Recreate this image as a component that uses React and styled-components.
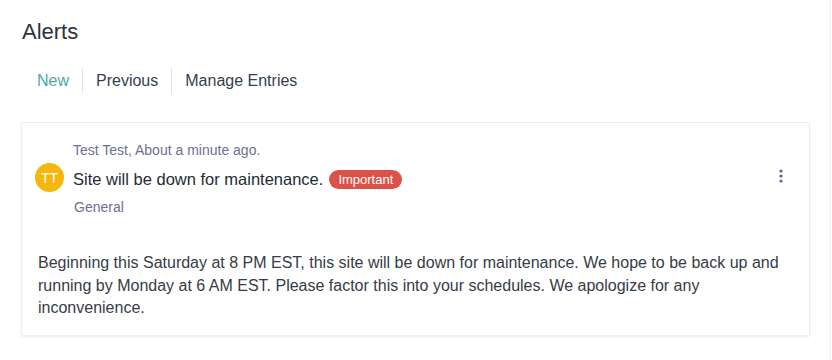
import React from "react";
import styled, { createGlobalStyle } from "styled-components";

const GlobalStyle = createGlobalStyle`
	html, body {
		margin: 0;
		padding: 0;
		background: #fff;
	}
	body {
		font-family: "Liberation Sans", Arial, sans-serif;
		-webkit-font-smoothing: antialiased;
	}
`;

const Page = styled.div`
	width: 831px;
	min-height: 360px;
	box-sizing: border-box;
	border-right: 1px solid #f0f0f2;
	padding: 19px 22px 0 21px;
`;

const Heading = styled.h1`
	margin: 0 0 0 1px;
	font-size: 22px;
	line-height: 26px;
	font-weight: 400;
	color: #2b333d;
`;

const Tabs = styled.nav`
	display: flex;
	align-items: center;
	margin: 23px 0 29px 3px;
`;

const Tab = styled.a`
	display: flex;
	align-items: center;
	height: 25px;
	padding: 0 13px;
	font-size: 16px;
	color: ${(p) => (p.$active ? "#4ba7a8" : "#333f4f")};
	cursor: pointer;
	& + & {
		border-left: 1px solid #dfe1e4;
	}
`;

const Card = styled.section`
	box-sizing: border-box;
	width: 789px;
	border: 1px solid #eeeeef;
	border-radius: 2px;
	box-shadow: 0 1px 2px rgba(0, 0, 0, 0.08);
	padding: 17px 16px 15px 13px;
`;

const Header = styled.div`
	display: grid;
	grid-template-columns: 29px 1fr 24px;
	column-gap: 9px;
	align-items: center;
`;

const Meta = styled.div`
	grid-column: 2;
	font-size: 14px;
	line-height: 20px;
	color: #6d7094;
	margin-top: ${(p) => (p.$tag ? "5px" : "0")};
	margin-left: ${(p) => (p.$tag ? "1px" : "0")};
`;

const Avatar = styled.div`
	grid-column: 1;
	width: 29px;
	height: 29px;
	border-radius: 50%;
	background: #f5b70c;
	color: #fff;
	font-size: 14px;
	display: flex;
	align-items: center;
	justify-content: center;
	margin-top: 3px;
`;

const TitleRow = styled.div`
	grid-column: 2;
	display: flex;
	align-items: center;
	gap: 6px;
	height: 24px;
	margin-top: 7px;
`;

const Title = styled.span`
	font-size: 16.5px;
	color: #262b33;
`;

const Badge = styled.span`
	display: inline-flex;
	align-items: center;
	height: 19px;
	padding: 0 9px;
	border-radius: 10px;
	background: #dc5249;
	color: #fff;
	font-size: 13px;
`;

const MenuButton = styled.button`
	grid-column: 3;
	width: 24px;
	height: 24px;
	border: none;
	background: none;
	padding: 0;
	display: flex;
	align-items: center;
	justify-content: center;
	cursor: pointer;
`;

const Body = styled.p`
	margin: 35px 0 0 3px;
	font-size: 16px;
	line-height: 22.5px;
	color: #373c45;
	max-width: 755px;
`;

const Kebab = () => (
	<svg width="6" height="16" viewBox="0 0 6 16">
		<circle cx="3" cy="3" r="1.6" fill="#5e6189" />
		<circle cx="3" cy="8" r="1.6" fill="#5e6189" />
		<circle cx="3" cy="13" r="1.6" fill="#5e6189" />
	</svg>
);

const tabs = ["New", "Previous", "Manage Entries"];

export default function App() {
	return (
		<>
			<GlobalStyle />
			<Page>
				<Heading>Alerts</Heading>
				<Tabs>
					{tabs.map((t, i) => (
						<Tab key={t} $active={i === 0}>
							{t}
						</Tab>
					))}
				</Tabs>
				<Card>
					<Header>
						<Meta style={{ gridRow: 1 }}>Test Test, About a minute ago.</Meta>
						<Avatar style={{ gridRow: 2 }}>TT</Avatar>
						<TitleRow style={{ gridRow: 2 }}>
							<Title>Site will be down for maintenance.</Title>
							<Badge>Important</Badge>
						</TitleRow>
						<MenuButton style={{ gridRow: 2 }} aria-label="More">
							<Kebab />
						</MenuButton>
						<Meta $tag style={{ gridRow: 3 }}>
							General
						</Meta>
					</Header>
					<Body>
						Beginning this Saturday at 8 PM EST, this site will be down for maintenance. We hope to be back
						up and running by Monday at 6 AM EST. Please factor this into your schedules. We apologize for
						any inconvenience.
					</Body>
				</Card>
			</Page>
		</>
	);
}
